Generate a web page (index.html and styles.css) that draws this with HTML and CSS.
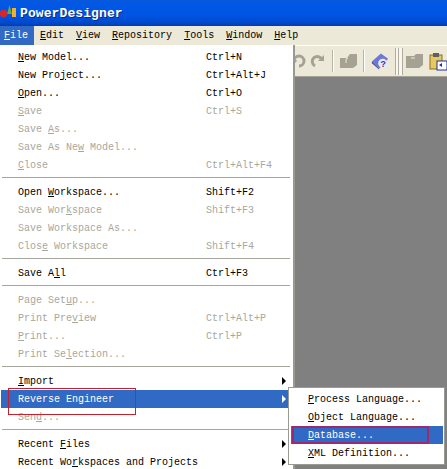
FILE: index.html
```html
<!DOCTYPE html>
<html lang="en">
<head>
  <meta charset="UTF-8" />
  <title>PowerDesigner</title>
  <link rel="stylesheet" href="styles.css">
</head>
<body>
  <div class="window">
    <div class="titlebar">
      <svg class="app-icon" width="20" height="20" viewBox="0 0 20 20">
        <rect x="12" y="5" width="4" height="9" fill="#f0b030"/>
        <path d="M7 11 L9.5 2 L12 11 Z" fill="#5fae4a"/>
        <circle cx="3.5" cy="10.5" r="3.7" fill="#d8262c"/>
      </svg>
      <span class="app-name">PowerDesigner</span>
    </div>

    <div class="menubar">
      <span class="top-item active"><u>F</u>ile</span>
      <span class="top-item"><u>E</u>dit</span>
      <span class="top-item"><u>V</u>iew</span>
      <span class="top-item"><u>R</u>epository</span>
      <span class="top-item"><u>T</u>ools</span>
      <span class="top-item"><u>W</u>indow</span>
      <span class="top-item"><u>H</u>elp</span>
    </div>

    <div class="toolbar">
      <svg class="tool undo" width="14" height="16" viewBox="0 0 14 16">
        <path d="M2 8 a5 5 0 1 1 5 5 M1 6 l3 3" fill="none" stroke="#a5a294" stroke-width="3"/>
      </svg>
      <svg class="tool redo" width="14" height="16" viewBox="0 0 14 16">
        <path d="M12 7 a5 5 0 1 0 -7 6" fill="none" stroke="#a5a294" stroke-width="3"/>
        <path d="M8 8 h6 v-6 z" fill="#a5a294"/>
      </svg>
      <span class="tool-sep sep-a"></span>
      <svg class="tool" width="17" height="16" viewBox="0 0 17 16">
        <path d="M0 5 h7 l3 -4 h7 v11 l-4 3 h-13 z" fill="#a5a294"/>
        <path d="M6 6 v4 M6 6 l2 -1" stroke="#ece9d8" fill="none"/>
      </svg>
      <span class="tool-sep sep-b"></span>
      <svg class="tool" width="18" height="19" viewBox="0 0 20 20">
        <path d="M1 10 L11 1 L19 7 L9 18 Z" fill="#6d78d8"/>
        <path d="M1 10 L9 18 L9 19 L1 12 Z" fill="#3a3f90"/>
        <circle cx="13" cy="12" r="5" fill="#e8e8f8"/>
        <text x="10.5" y="16" class="help-mark">?</text>
      </svg>
      <span class="grip"></span>
      <svg class="tool" width="17" height="16" viewBox="0 0 17 16">
        <path d="M0 3 h8 l2 -2 h7 v11 l-4 3 h-13 z" fill="#a5a294"/>
        <path d="M5 5 h4" stroke="#ece9d8"/>
      </svg>
      <svg class="tool paste" width="18" height="19" viewBox="0 0 18 19">
        <rect x="1" y="3" width="12" height="14" fill="#e8c860" stroke="#8a7020"/>
        <rect x="4" y="1" width="6" height="4" fill="#606060"/>
        <rect x="8" y="9" width="10" height="9" fill="#fff" stroke="#20309a"/>
        <path d="M10 13 l3 -2 v4 z" fill="#20309a"/>
      </svg>
    </div>

    <div class="workspace"></div>

    <div class="menu file-menu">
      <div class="row"><span class="label"><u>N</u>ew Model...</span><span class="keys">Ctrl+N</span></div>
      <div class="row"><span class="label">New Pro<u>j</u>ect...</span><span class="keys">Ctrl+Alt+J</span></div>
      <div class="row"><span class="label"><u>O</u>pen...</span><span class="keys">Ctrl+O</span></div>
      <div class="row off"><span class="label"><u>S</u>ave</span><span class="keys">Ctrl+S</span></div>
      <div class="row off"><span class="label">Save <u>A</u>s...</span></div>
      <div class="row off"><span class="label">Save As Ne<u>w</u> Model...</span></div>
      <div class="row off"><span class="label"><u>C</u>lose</span><span class="keys">Ctrl+Alt+F4</span></div>
      <div class="sep"></div>
      <div class="row"><span class="label">Open <u>W</u>orkspace...</span><span class="keys">Shift+F2</span></div>
      <div class="row off"><span class="label">Save Wor<u>k</u>space</span><span class="keys">Shift+F3</span></div>
      <div class="row off"><span class="label">Save Workspace As...</span></div>
      <div class="row off"><span class="label">Clos<u>e</u> Workspace</span><span class="keys">Shift+F4</span></div>
      <div class="sep"></div>
      <div class="row"><span class="label">Save A<u>l</u>l</span><span class="keys">Ctrl+F3</span></div>
      <div class="sep"></div>
      <div class="row off"><span class="label">Page Set<u>u</u>p...</span></div>
      <div class="row off"><span class="label">Print Pre<u>v</u>iew</span><span class="keys">Ctrl+Alt+P</span></div>
      <div class="row off"><span class="label"><u>P</u>rint...</span><span class="keys">Ctrl+P</span></div>
      <div class="row off"><span class="label">Print Se<u>l</u>ection...</span></div>
      <div class="sep"></div>
      <div class="row more"><span class="label"><u>I</u>mport</span></div>
      <div class="row more hot"><span class="label">Reverse Engineer</span></div>
      <div class="row off"><span class="label">Sen<u>d</u>...</span></div>
      <div class="sep"></div>
      <div class="row more"><span class="label">Recent <u>F</u>iles</span></div>
      <div class="row more"><span class="label">Recent Wo<u>r</u>kspaces and Projects</span></div>
    </div>

    <div class="menu sub-menu">
      <div class="row"><span class="label"><u>P</u>rocess Language...</span></div>
      <div class="row"><span class="label"><u>O</u>bject Language...</span></div>
      <div class="row hot"><span class="label"><u>D</u>atabase...</span></div>
      <div class="row"><span class="label"><u>X</u>ML Definition...</span></div>
    </div>

    <div class="mark mark-reverse"></div>
    <div class="mark mark-database"></div>
  </div>
</body>
</html>
```

FILE: styles.css
```css
html, body { margin: 0; height: 100%; overflow: hidden; }
body { font-family: "Liberation Mono", "DejaVu Sans Mono", monospace; font-size: 10px; color: #000; }
.window { position: relative; width: 447px; height: 469px; display: flex; flex-direction: column; overflow: hidden; background: #808080; }

.titlebar { height: 26px; display: flex; align-items: center; background: linear-gradient(#0a5ad8, #0258e6 12%, #0054e3 60%, #0048c8 90%, #003cb0); }
.app-name { color: #fff; font-size: 13px; font-weight: bold; letter-spacing: 0.1px; text-shadow: 1px 1px 0 #0a2a80; }

.menubar { height: 19px; display: flex; background: #ece9d8; box-sizing: border-box; }
.top-item { padding: 4px 6px 0; margin-right: 0; }
.top-item.active { background: #316ac5; color: #fff; padding-left: 4px; padding-right: 6px; }

.toolbar { height: 32px; display: flex; align-items: center; background: #ece9d8; border-top: 1px solid #fff; border-bottom: 1px solid #a5a294; box-sizing: border-box; padding-left: 292px; }
.tool { flex: none; }
.redo { margin-left: 4px; }
.tool-sep { width: 1px; height: 22px; background: #b8b5a6; border-right: 1px solid #fff; }
.sep-a { margin: 0 6px 0 8px; }
.sep-b { margin: 0 6px; }
.grip { width: 8px; height: 27px; margin: 0 3px 0 6px; background: linear-gradient(to right, #b0ad9e 1px, #f8f6ee 1px, #f8f6ee 3px, #b0ad9e 3px, #b0ad9e 4px, #f8f6ee 4px, #f8f6ee 7px, #b0ad9e 7px); flex: none; }
.paste { margin-left: 6px; }
.help-mark { font-size: 10px; font-weight: bold; fill: #3a3f90; }
.workspace { flex: 1; background: #808080; }

.menu { position: absolute; background: #fff; box-sizing: border-box; }
.file-menu { left: 0; top: 45px; width: 295px; height: 430px; padding: 3px 3px 0 1px; border-right: 2px solid #9a9a94; }
.sub-menu { left: 288px; top: 387px; width: 157px; height: 78px; padding: 2px 1px 0 2px; border: 1px solid #9a9a94; }

.row { position: relative; height: 18px; display: flex; align-items: center; padding-left: 17px; white-space: nowrap; }
.label { width: 188px; flex: none; }
.off { color: #a8a79c; }
.hot { background: #316ac5; color: #fff; }
.more::after { content: ""; position: absolute; right: 4px; top: 5px; border-left: 4px solid #000; border-top: 4px solid transparent; border-bottom: 4px solid transparent; }
.hot.more::after { border-left-color: #fff; }
.sep { height: 9px; box-sizing: border-box; padding-top: 3px; margin-left: 1px; }
.sep::before { content: ""; display: block; height: 1px; background: #a5a59c; }

.mark { position: absolute; box-sizing: border-box; border: 1px solid #c8202a; }
.mark-reverse { left: 8px; top: 388px; width: 128px; height: 27px; }
.mark-database { left: 292px; top: 426px; width: 137px; height: 18px; border: 2px solid #9c2a6e; }
```
